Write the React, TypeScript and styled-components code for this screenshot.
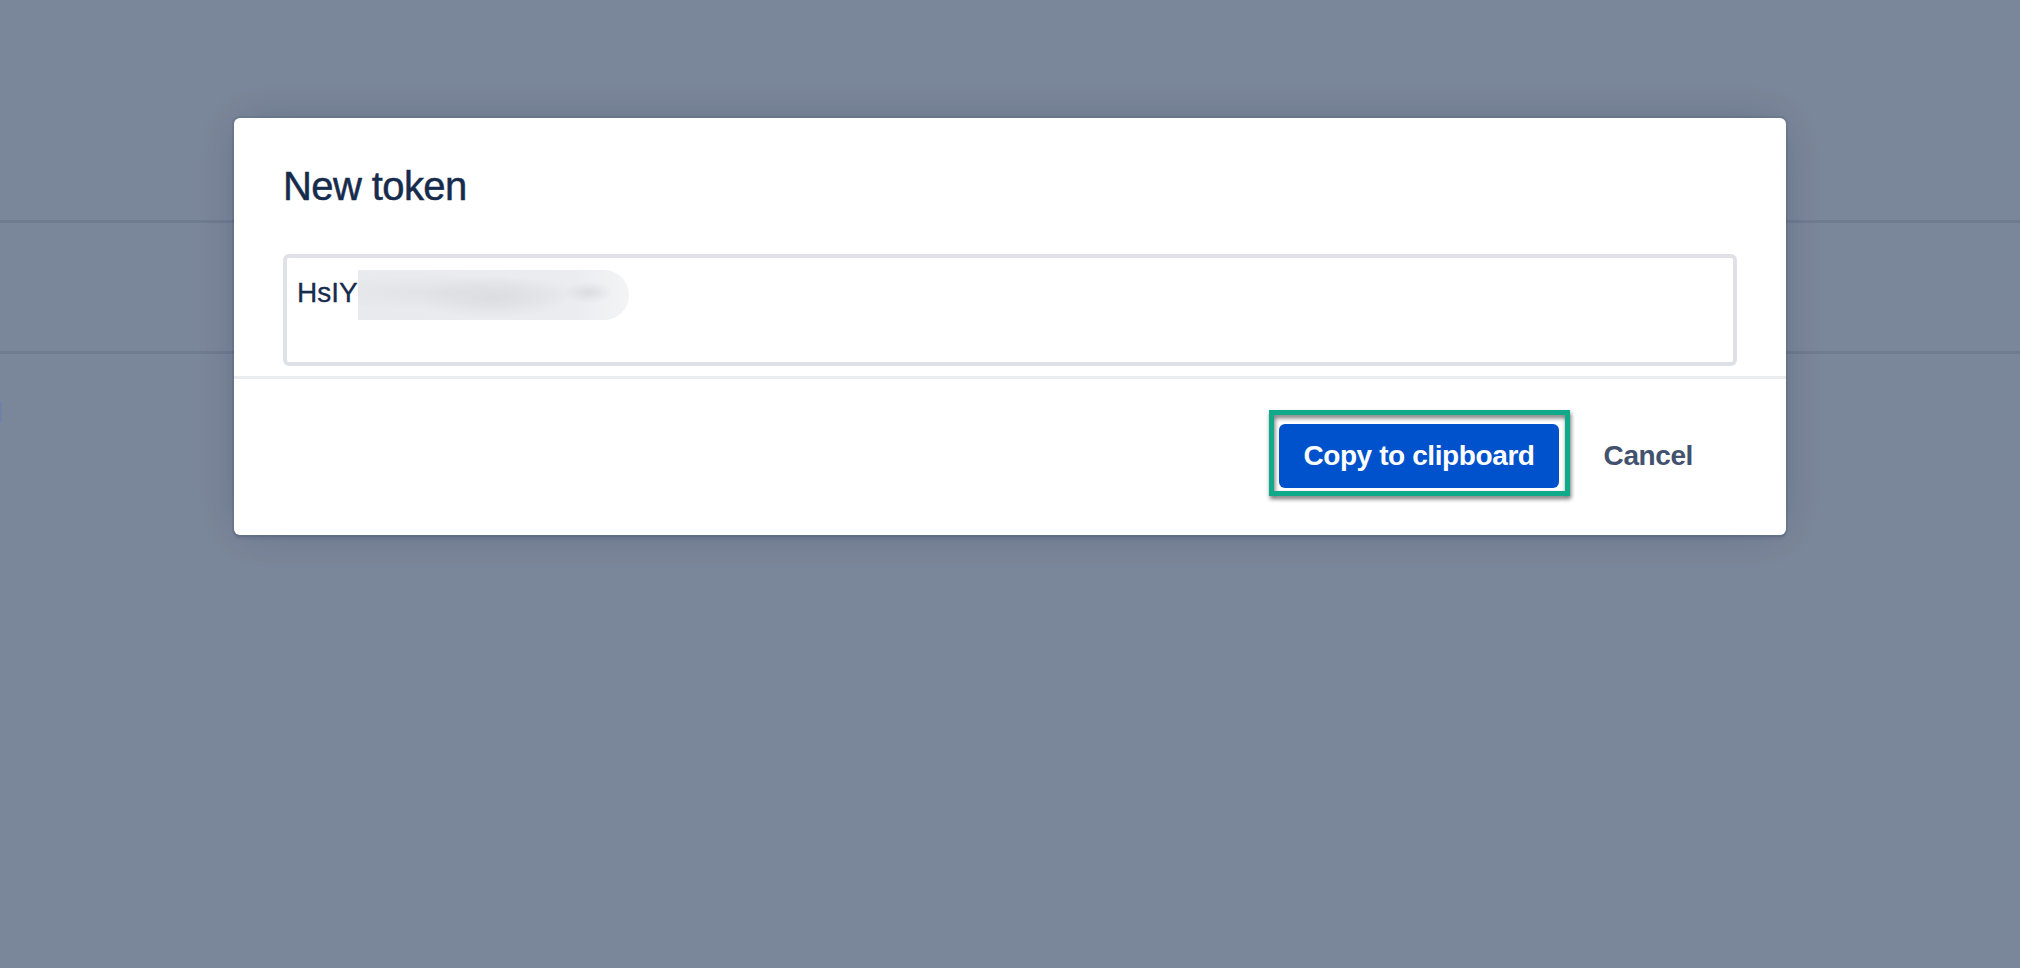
import React from "react";
import styled, { createGlobalStyle } from "styled-components";

const GlobalStyle = createGlobalStyle`
  html, body {
    margin: 0;
    padding: 0;
  }
  body {
    font-family: "Liberation Sans", Arial, sans-serif;
    background: #7a8699;
  }
`;

/* Dimmed page that sits behind the dialog */
const Page = styled.div`
  position: relative;
  width: 2020px;
  height: 968px;
  overflow: hidden;
  background: #7a8699;
  display: flex;
  flex-direction: column;
`;

const PageRow = styled.div<{ $height: number }>`
  height: ${(p) => p.$height}px;
  border-bottom: 3px solid #6f7b8f;
  flex: none;
`;

const PageTail = styled.div`
  padding-top: 48px;
`;

const LinkStub = styled.span`
  display: block;
  width: 2px;
  height: 20px;
  background: #7180a6;
`;

/* Dialog */
const Dialog = styled.section`
  position: absolute;
  top: 118px;
  left: 50%;
  transform: translateX(-50%);
  width: 1552px;
  background: #ffffff;
  border-radius: 6px;
  box-shadow: 0 0 0 2px rgba(9, 30, 66, 0.08), 0 4px 2px rgba(9, 30, 66, 0.08),
    0 0 40px -12px rgba(9, 30, 66, 0.31);
  display: flex;
  flex-direction: column;
`;

const Body = styled.div`
  padding: 44px 49px 10px 49px;
  display: flex;
  flex-direction: column;
  gap: 44px;
  border-bottom: 3px solid #ebecf0;
`;

const Title = styled.h1`
  margin: 0;
  font-family: "Liberation Sans", Arial, sans-serif;
  font-size: 40px;
  line-height: 48px;
  font-weight: 400;
  letter-spacing: -0.6px;
  color: #172b4d;
  -webkit-text-stroke: 0.5px #172b4d;
`;

const TokenField = styled.div`
  box-sizing: border-box;
  height: 112px;
  border: 4px solid #dfe1e6;
  border-radius: 6px;
  padding: 12px 10px;
  font-family: "Liberation Sans", Arial, sans-serif;
  font-size: 28px;
  line-height: 40px;
  color: #172b4d;
  -webkit-text-stroke: 0.3px #172b4d;
  white-space: nowrap;
`;

/* Obscured remainder of the secret */
const Redacted = styled.span`
  display: inline-block;
  width: 271px;
  height: 50px;
  vertical-align: -18px;
  border-radius: 0 26px 26px 0;
  background: radial-gradient(ellipse 9% 22% at 85% 45%, #dcdde1, transparent),
    radial-gradient(ellipse 28% 42% at 50% 55%, #dcdde1, transparent),
    radial-gradient(ellipse 55% 36% at 32% 45%, #e1e2e6, transparent),
    linear-gradient(90deg, #e9eaed, #ebecef 80%, #f3f4f6);
`;

const Footer = styled.div`
  display: flex;
  justify-content: flex-end;
  align-items: center;
  gap: 21px;
  padding: 45px 69px 47px 49px;
`;

const ButtonWrap = styled.div`
  position: relative;
  display: flex;
`;

const Button = styled.button<{ $primary?: boolean }>`
  height: 64px;
  padding: 0 24px;
  border: none;
  border-radius: 6px;
  font-family: "Liberation Sans", Arial, sans-serif;
  font-size: 28px;
  line-height: 64px;
  font-weight: 700;
  letter-spacing: -0.4px;
  cursor: pointer;
  background: ${(p) => (p.$primary ? "#0052cc" : "transparent")};
  color: ${(p) => (p.$primary ? "#ffffff" : "#42526e")};
`;

/* Highlight frame drawn around the primary action */
const Highlight = styled.span`
  position: absolute;
  left: -10px;
  top: -14px;
  right: -11px;
  bottom: -8px;
  border: 5px solid #10aa8b;
  pointer-events: none;
  filter: drop-shadow(1px 3px 2px rgba(0, 0, 0, 0.55));
`;

export default function App() {
  return (
    <>
      <GlobalStyle />
      <Page>
        <PageRow $height={220} />
        <PageRow $height={128} />
        <PageTail>
          <LinkStub />
        </PageTail>

        <Dialog role="dialog" aria-label="New token">
          <Body>
            <Title>New token</Title>
            <TokenField>
              HsIY
              <Redacted />
            </TokenField>
          </Body>
          <Footer>
            <ButtonWrap>
              <Button $primary>Copy to clipboard</Button>
              <Highlight />
            </ButtonWrap>
            <Button>Cancel</Button>
          </Footer>
        </Dialog>
      </Page>
    </>
  );
}
